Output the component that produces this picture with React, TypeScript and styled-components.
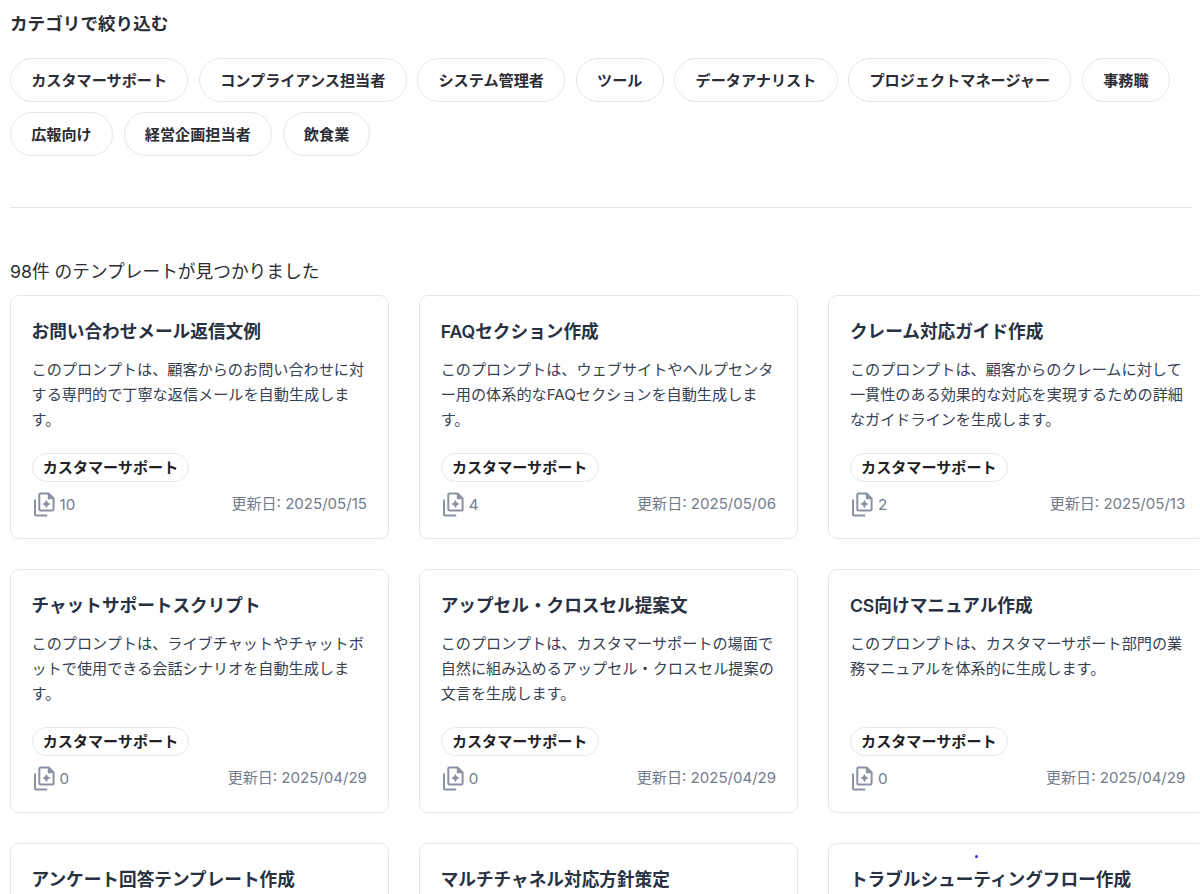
import React from "react";
import styled, { createGlobalStyle } from "styled-components";

const GlobalStyle = createGlobalStyle`
  * { box-sizing: border-box; }
  html, body { margin: 0; background: #fff; overflow: hidden; }
  body {
    height: 894px;
    font-family: Inter, "Noto Sans CJK JP", sans-serif;
    font-size: 15.15px;
    color: #2c2c35;
  }
`;

const Page = styled.main`
  height: 894px;
  overflow: hidden;
  padding: 10px 8px 0 10px;
`;

const Heading = styled.h2`
  margin: 0 0 20px;
  font-size: 17.6px;
  line-height: 28px;
  font-weight: 600;
`;

const Chips = styled.div`
  display: flex;
  flex-wrap: wrap;
  gap: 10.7px;
  padding-bottom: 51.5px;
  border-bottom: 1px solid #e2e8f0;
`;

const Chip = styled.button`
  height: 43.6px;
  padding: 0 20.2px 2px;
  border: 1px solid #e2e8f0;
  border-radius: 22px;
  background: #fff;
  font: inherit;
  font-weight: 600;
  color: inherit;
  white-space: nowrap;
`;

const Count = styled.p`
  margin: 50px 0 9px;
  font-size: 17.7px;
  line-height: 28px;
`;

const Grid = styled.div`
  display: grid;
  grid-template-columns: repeat(3, 378.5px);
  grid-auto-rows: 243.4px;
  gap: 30.5px 30.7px;
`;

const Card = styled.article`
  display: flex;
  flex-direction: column;
  padding: 22px 20.6px 0 20.5px;
  border: 1px solid #e2e8f0;
  border-radius: 9px;
  background: #fff;
`;

const Title = styled.h3`
  margin: 0;
  font-size: 17.65px;
  line-height: 28px;
  font-weight: 600;
  color: #273142;
  white-space: nowrap;
`;

const Description = styled.p`
  margin: 10.6px 0 20px;
  height: 76.3px;
  line-height: 25.2px;
  color: #374151;
`;

const Tag = styled.span`
  align-self: flex-start;
  height: 29px;
  padding: 0 10.2px;
  border: 1px solid #e2e8f0;
  border-radius: 15px;
  line-height: 27px;
  font-size: 15.1px;
  font-weight: 600;
  color: #1f1f25;
`;

const Footer = styled.div`
  display: flex;
  justify-content: space-between;
  margin-top: 9px;
  line-height: 26px;
  color: #747c8c;
`;

const Uses = styled.span`
  display: flex;
  gap: 3px;
  padding-top: 1px;
`;

const Updated = styled.time`
  line-height: 25px;
  font-size: 15.05px;
`;

const CopyIcon = () => (
  <svg width="25" height="26" viewBox="0 0 25 26" fill="none" stroke="#8a92a1" strokeWidth="2">
    <path d="M3 7.5V22.4a1 1 0 0 0 1 1H15.2" />
    <path d="M8.6 1.4H16.6L21.6 6.5V17.2a1.3 1.3 0 0 1-1.3 1.3H8.6a1.3 1.3 0 0 1-1.3-1.3V2.7a1.3 1.3 0 0 1 1.3-1.3Z" />
    <path d="M15.8 1.2V7.2H22Z" fill="#8a92a1" stroke="none" />
    <path d="M14.4 7.8L15.8 10.6L18.5 12L15.8 13.4L14.4 16.2L13 13.4L10.3 12L13 10.6Z" fill="#8a92a1" stroke="none" />
  </svg>
);

const categories = [
  "カスタマーサポート", "コンプライアンス担当者", "システム管理者", "ツール", "データアナリスト",
  "プロジェクトマネージャー", "事務職", "広報向け", "経営企画担当者", "飲食業",
];

const templates = [
  { title: "お問い合わせメール返信文例", text: "このプロンプトは、顧客からのお問い合わせに対する専門的で丁寧な返信メールを自動生成します。", uses: 10, date: "2025/05/15" },
  { title: "FAQセクション作成", text: "このプロンプトは、ウェブサイトやヘルプセンター用の体系的なFAQセクションを自動生成します。", uses: 4, date: "2025/05/06" },
  { title: "クレーム対応ガイド作成", text: "このプロンプトは、顧客からのクレームに対して一貫性のある効果的な対応を実現するための詳細なガイドラインを生成します。", uses: 2, date: "2025/05/13" },
  { title: "チャットサポートスクリプト", text: "このプロンプトは、ライブチャットやチャットボットで使用できる会話シナリオを自動生成します。", uses: 0, date: "2025/04/29" },
  { title: "アップセル・クロスセル提案文", text: "このプロンプトは、カスタマーサポートの場面で自然に組み込めるアップセル・クロスセル提案の文言を生成します。", uses: 0, date: "2025/04/29" },
  { title: "CS向けマニュアル作成", text: "このプロンプトは、カスタマーサポート部門の業務マニュアルを体系的に生成します。", uses: 0, date: "2025/04/29" },
  { title: "アンケート回答テンプレート作成" },
  { title: "マルチチャネル対応方針策定" },
  { title: "トラブルシューティングフロー作成", marker: true },
];

const Marker = styled.i`
  position: absolute;
  left: 975px;
  top: 855px;
  width: 3px;
  height: 3px;
  border-radius: 50%;
  background: #2f35d8;
`;

export default function App() {
  return (
    <Page lang="ja">
      <GlobalStyle />
      <Heading>カテゴリで絞り込む</Heading>
      <Chips>
        {categories.map((c) => <Chip key={c}>{c}</Chip>)}
      </Chips>
      <Count>98件 のテンプレートが見つかりました</Count>
      <Grid>
        {templates.map((t) => (
          <Card key={t.title}>
            <Title>{t.title}</Title>
            {t.marker && <Marker />}
            {t.text && (
              <>
                <Description>{t.text}</Description>
                <Tag>カスタマーサポート</Tag>
                <Footer>
                  <Uses><CopyIcon />{t.uses}</Uses>
                  <Updated>更新日: {t.date}</Updated>
                </Footer>
              </>
            )}
          </Card>
        ))}
      </Grid>
    </Page>
  );
}
